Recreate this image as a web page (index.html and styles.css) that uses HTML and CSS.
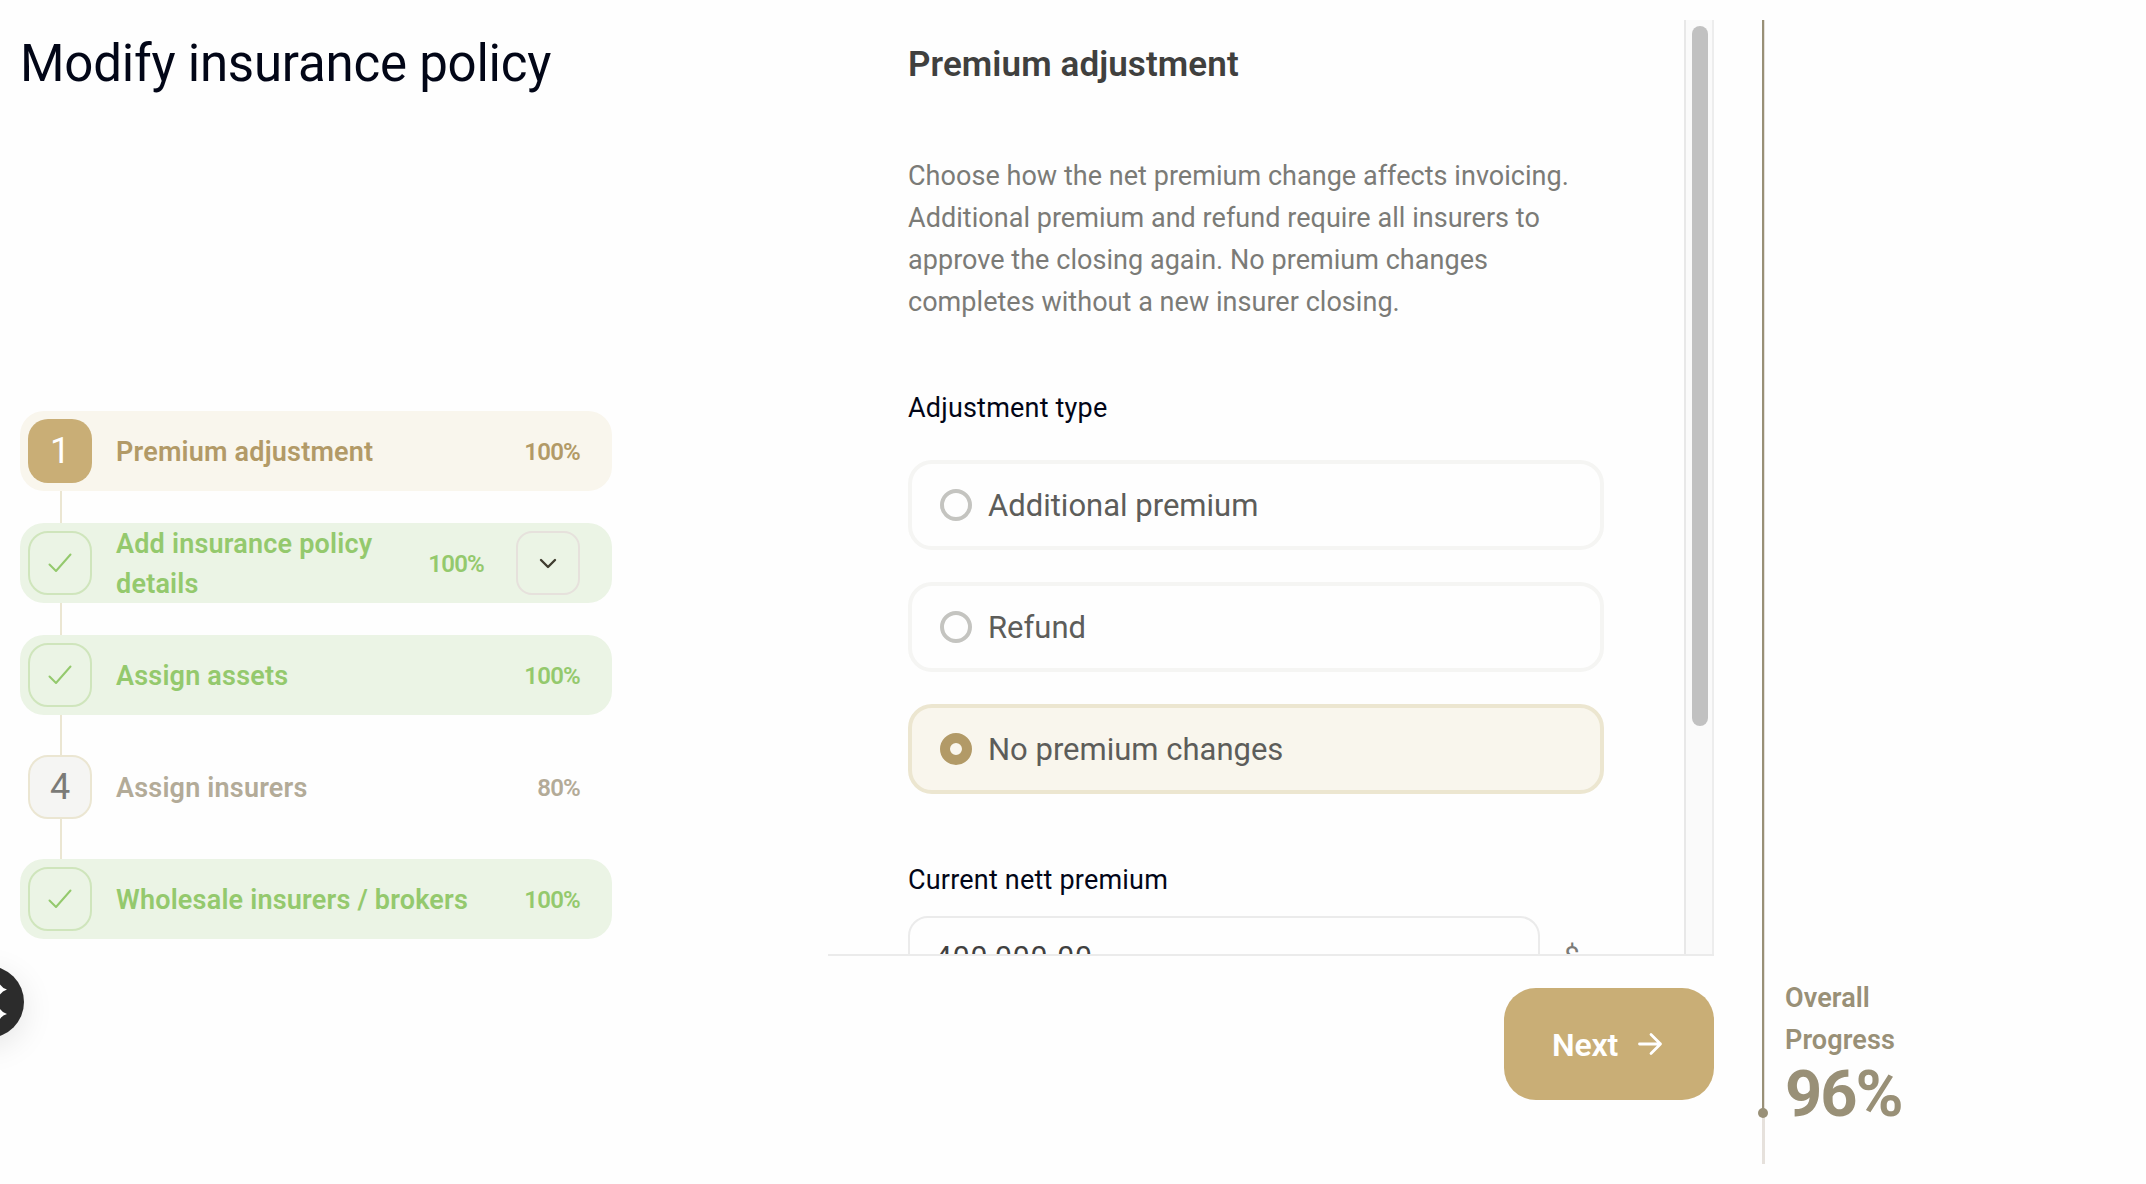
FILE: index.html
```html
<!DOCTYPE html>
<html lang="en">
<head>
    <meta charset="UTF-8">
    <meta name="viewport" content="width=device-width, initial-scale=1.0">
    <title>Modify insurance policy</title>
    <link rel="stylesheet" href="styles.css">
</head>
<body>
    <div class="page">
      <div class="sidebar">
        <h1>Modify insurance policy</h1>
        <div class="steps">
          <div class="step active">
            <div class="badge">1</div>
            <div class="name">Premium adjustment</div>
            <div class="percent">100%</div>
          </div>
          <div class="step done">
            <div class="badge">
              <svg width="24" height="20" viewBox="0 0 24 20"><path d="M1.5 11.5 L8 18 L22.5 1.5"/></svg>
            </div>
            <div class="name">Add insurance policy details</div>
            <div class="percent">100%</div>
            <button class="toggle">
              <svg width="18" height="12" viewBox="0 0 18 12"><path d="M2 3 L9 10 L16 3"/></svg>
            </button>
          </div>
          <div class="step done">
            <div class="badge">
              <svg width="24" height="20" viewBox="0 0 24 20"><path d="M1.5 11.5 L8 18 L22.5 1.5"/></svg>
            </div>
            <div class="name">Assign assets</div>
            <div class="percent">100%</div>
          </div>
          <div class="step">
            <div class="badge">4</div>
            <div class="name">Assign insurers</div>
            <div class="percent">80%</div>
          </div>
          <div class="step done">
            <div class="badge">
              <svg width="24" height="20" viewBox="0 0 24 20"><path d="M1.5 11.5 L8 18 L22.5 1.5"/></svg>
            </div>
            <div class="name">Wholesale insurers / brokers</div>
            <div class="percent">100%</div>
          </div>
        </div>
      </div>

      <div class="panel">
        <div class="scroll">
          <div class="content">
            <h2>Premium adjustment</h2>
            <p class="intro">
              Choose how the net premium change affects invoicing.<br>
              Additional premium and refund require all insurers to<br>
              approve the closing again. No premium changes<br>
              completes without a new insurer closing.
            </p>
            <div class="label">Adjustment type</div>
            <div class="options">
              <div class="option"><span class="radio"></span>Additional premium</div>
              <div class="option"><span class="radio"></span>Refund</div>
              <div class="option selected"><span class="radio"></span>No premium changes</div>
            </div>
            <div class="label">Current nett premium</div>
            <div class="amount">
              <div class="input">400,000.00</div>
              <span class="currency">$</span>
            </div>
          </div>
          <div class="track"><div class="thumb"></div></div>
        </div>
        <div class="footer">
          <button class="next">
            <span>Next</span>
            <svg width="26" height="24" viewBox="0 0 26 24"><path d="M2.5 12 H23.5 M14 2.5 L23.5 12 L14 21.5"/></svg>
          </button>
        </div>
      </div>

      <div class="progress">
        <div class="bar">
          <div class="fill"></div>
          <div class="dot"></div>
        </div>
        <div class="overall">
          <div class="caption">Overall<br>Progress</div>
          <div class="total">96%</div>
        </div>
      </div>
    </div>

    <div class="chat">
      <svg width="72" height="72" viewBox="0 0 72 72">
        <path d="M46 14 Q48 21.5 55 23.5 Q48 25.5 46 33 Q44 25.5 37 23.5 Q44 21.5 46 14 Z"/>
        <path d="M46 38.5 Q48 46 55 48 Q48 50 46 57.5 Q44 50 37 48 Q44 46 46 38.5 Z"/>
      </svg>
    </div>
</body>
</html>
```
FILE: styles.css
```css
* {
  box-sizing: border-box;
}

body {
  margin: 0;
  height: 1184px;
  overflow: hidden;
  background-color: #fefefe;
  font-family: Roboto, "Liberation Sans", sans-serif;
  color: #020617;
}

button {
  border: none;
  padding: 0;
  background: none;
  font-family: inherit;
  cursor: pointer;
}

svg {
  display: block;
  fill: none;
  stroke-linecap: round;
  stroke-linejoin: round;
}

.page {
  display: flex;
  height: 1184px;
  padding: 20px;
}

.sidebar {
  width: 592px;
  margin-right: 216px;
}

h1 {
  margin: 0;
  padding-top: 14px;
  height: 391px;
  font-size: 51px;
  font-weight: 400;
  line-height: 60px;
  letter-spacing: -0.22px;
}

/* steps */
.steps {
  position: relative;
  display: flex;
  flex-direction: column;
  gap: 32px;
}

.steps::before {
  content: "";
  position: absolute;
  left: 40px;
  top: 80px;
  bottom: 80px;
  width: 2px;
  background-color: #ebe6d2;
}

.step {
  position: relative;
  display: flex;
  align-items: center;
  height: 80px;
  padding: 0 32px 0 8px;
  border-radius: 24px;
  color: #b3ab98;
}

.step.active {
  background-color: #f9f6ed;
  color: #b29a67;
}

.step.done {
  background-color: #ebf4e5;
  color: #94c96d;
}

.badge {
  display: flex;
  align-items: center;
  justify-content: center;
  width: 64px;
  height: 64px;
  border: 2px solid #ebe6d2;
  border-radius: 20px;
  background-color: #f5f5f3;
  color: #7b7b77;
  font-size: 36px;
}

.active .badge {
  border: none;
  background-color: #c9ae76;
  color: #fff;
}

.done .badge {
  border-color: #cfe5bc;
  background-color: #ebf4e5;
}

.badge svg {
  stroke: #94c96d;
  stroke-width: 2;
}

.name {
  flex: 1;
  padding: 2px 0 0 24px;
  font-size: 27px;
  font-weight: 600;
  line-height: 40px;
  letter-spacing: 0.2px;
}

.percent {
  padding-top: 2px;
  margin-left: 32px;
  font-size: 24px;
  font-weight: 600;
  letter-spacing: -0.8px;
}

.toggle {
  display: flex;
  align-items: center;
  justify-content: center;
  width: 64px;
  height: 64px;
  margin-left: 32px;
  border: 2px solid #e6e1dc;
  border-radius: 16px;
}

.toggle svg {
  stroke: #403d30;
  stroke-width: 2.4;
}

/* form */
.panel {
  width: 886px;
  margin-right: 48px;
}

.scroll {
  display: flex;
  height: 936px;
  border-bottom: 2px solid #ebebeb;
  overflow: hidden;
}

.content {
  width: 856px;
  padding: 25px 80px 0;
}

h2 {
  margin: 0 0 70px;
  font-size: 35px;
  font-weight: 600;
  line-height: 40px;
  letter-spacing: 0.1px;
  color: #40403e;
}

.intro {
  margin: 0 0 67px;
  font-size: 27px;
  line-height: 42px;
  letter-spacing: 0.04px;
  white-space: nowrap;
  color: #7b7b77;
}

.label {
  font-size: 27px;
  line-height: 36px;
  letter-spacing: 0.2px;
}

.options {
  display: flex;
  flex-direction: column;
  gap: 32px;
  margin: 34px 0 68px;
}

.option {
  display: flex;
  align-items: center;
  gap: 16px;
  height: 90px;
  padding: 0 28px;
  border: 4px solid #f5f5f3;
  border-radius: 24px;
  font-size: 31px;
  color: #5d5d5a;
}

.option.selected {
  border-color: #ece6d0;
  background-color: #f9f6ed;
}

.radio {
  width: 32px;
  height: 32px;
  border: 4px solid #c4c4c0;
  border-radius: 50%;
}

.selected .radio {
  border: 10px solid #b29a67;
}

.amount {
  display: flex;
  align-items: center;
  gap: 24px;
  margin-top: 18px;
}

.input {
  width: 632px;
  height: 80px;
  padding-left: 25px;
  border: 2px solid #ebebeb;
  border-radius: 20px;
  font-size: 30px;
  line-height: 77px;
  letter-spacing: 0.9px;
  color: #40403e;
}

.currency {
  font-size: 28px;
  color: #7b7b77;
}

.track {
  width: 30px;
  padding: 6px;
  border-left: 2px solid #e8e8e8;
  border-right: 2px solid #ededed;
  background-color: #fafafa;
}

.thumb {
  width: 16px;
  height: 700px;
  border-radius: 8px;
  background-color: #c1c1c1;
}

.footer {
  display: flex;
  justify-content: flex-end;
  padding-top: 32px;
}

.next {
  display: flex;
  align-items: center;
  gap: 19px;
  width: 210px;
  height: 112px;
  padding-left: 48px;
  border-radius: 32px;
  background-color: #c9ae76;
  color: #fff;
  font-size: 32px;
  font-weight: 600;
  letter-spacing: -0.2px;
}

.next span {
  padding-top: 2px;
}

.next svg {
  stroke: #fff;
  stroke-width: 2.8;
}

/* overall progress */
.progress {
  display: flex;
  color: #999077;
}

.bar {
  position: relative;
  width: 3px;
  height: 1144px;
  background-color: #e6e1dc;
}

.fill {
  width: 2px;
  height: 1093px;
  background-color: #999077;
}

.dot {
  position: absolute;
  left: -4px;
  top: 1088px;
  width: 10px;
  height: 10px;
  border-radius: 50%;
  background-color: #999077;
}

.overall {
  padding: 957px 0 0 20px;
  font-weight: 600;
}

.caption {
  font-size: 27px;
  line-height: 42px;
  letter-spacing: 0.1px;
}

.total {
  font-size: 65px;
  font-weight: 700;
  line-height: 66px;
  letter-spacing: -2px;
}

/* chat button, partly off screen */
.chat {
  position: absolute;
  left: -48px;
  top: 966px;
  width: 72px;
  height: 72px;
  border-radius: 50%;
  background-color: #2c2c2c;
  box-shadow: 0 8px 32px rgba(0, 0, 0, 0.1);
}

.chat svg {
  fill: #fff;
}
```
